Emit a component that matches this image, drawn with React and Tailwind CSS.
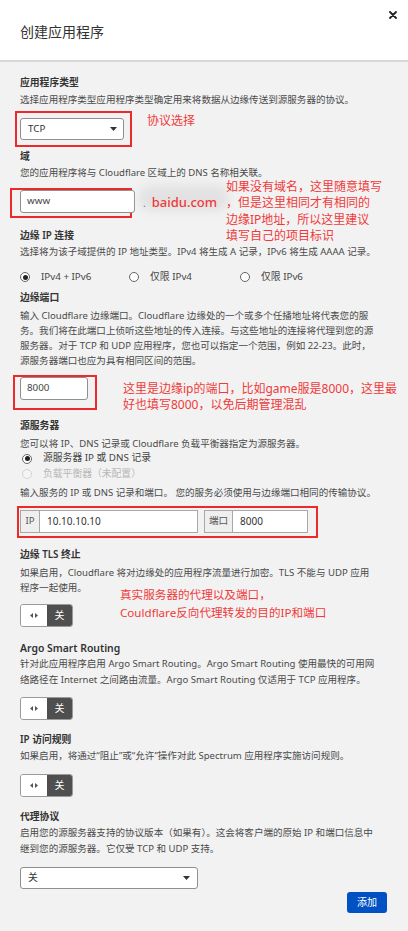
import React from "react";

const FONT = { fontFamily: '"Noto Sans", "Noto Sans CJK SC", sans-serif' };

function Label({ children, className = "" }) {
  return (
    <div className={`text-[9.8px] leading-[16px] font-semibold text-[#333333] whitespace-nowrap ${className}`}>
      {children}
    </div>
  );
}

function Desc({ children, className = "" }) {
  return (
    <div className={`text-[9.55px] text-[#4a4a4a] whitespace-nowrap ${className}`}>{children}</div>
  );
}

function Caret() {
  return (
    <svg width="7" height="4" viewBox="0 0 7 4" className="shrink-0">
      <polygon points="0,0 7,0 3.5,4" fill="#333" />
    </svg>
  );
}

function Radio({ checked, disabled, label, className = "" }) {
  return (
    <div className={`flex items-center ${className}`}>
      <span
        className={`w-[10px] h-[10px] rounded-full border flex items-center justify-center ${
          disabled ? "border-[#d4d4d4] bg-[#f4f4f4]" : "border-[#666666] bg-white"
        }`}
      >
        {checked && <span className="w-[5px] h-[5px] rounded-full bg-[#222222]" />}
      </span>
      <span className={`ml-[11px] text-[9.8px] ${disabled ? "text-[#b8b8b8]" : "text-[#444444]"}`}>{label}</span>
    </div>
  );
}

function Toggle({ className = "" }) {
  return (
    <div className={`flex w-[53px] h-[23px] rounded-[3px] border border-[#9a9a9a] overflow-hidden ${className}`}>
      <div className="w-[26px] bg-white flex items-center justify-center">
        <svg width="8" height="5" viewBox="0 0 8 5">
          <polygon points="0,2.5 3,0 3,5" fill="#555" />
          <polygon points="8,2.5 5,0 5,5" fill="#555" />
        </svg>
      </div>
      <div className="flex-1 bg-[#4f4f4f] text-white flex items-center justify-center text-[10px]">关</div>
    </div>
  );
}

function AddonInput({ addon, value, width, addonWidth }) {
  return (
    <div className={`flex h-[23px] ${width}`}>
      <div
        className={`${addonWidth} bg-[#efefef] border border-[#a8a8a8] flex items-center justify-center text-[9.6px] text-[#555555]`}
      >
        {addon}
      </div>
      <div className="flex-1 bg-white border border-l-0 border-[#a8a8a8] flex items-center pl-[7px] text-[10px] text-[#333333]">
        {value}
      </div>
    </div>
  );
}

export default function App() {
  return (
    <div style={FONT} className="w-[408px] min-h-[931px] bg-[#f2f2f2]">
      {/* Header */}
      <div className="h-[62px] bg-white border-b-2 border-[#d9d9d9] relative">
        <div className="pl-[20px] pt-[22px] text-[14px] leading-[20px] text-[#333333]">创建应用程序</div>
        <svg width="8" height="8" viewBox="0 0 8 8" className="absolute left-[389px] top-[11px]">
          <path d="M1 1 L7 7 M7 1 L1 7" stroke="#222" strokeWidth="1.8" strokeLinecap="round" />
        </svg>
      </div>

      {/* Body */}
      <div className="pl-[20px] pr-[21px] pt-[13px] pb-[20px] flex flex-col">
        {/* 应用程序类型 */}
        <Label>应用程序类型</Label>
        <Desc className="mt-[1px] leading-[16px]">选择应用程序类型应用程序类型确定用来将数据从边缘传送到源服务器的协议。</Desc>
        <div className="mt-[3px] flex items-start">
          <div className="-ml-[5px] w-[117px] h-[36px] border-2 border-[#ec2a2a] pt-[5px] pl-[3px]">
            <div className="w-[104px] h-[22px] bg-white border border-[#8f8f8f] rounded-[3px] flex items-center justify-between pl-[7px] pr-[6px]">
              <span className="text-[9.8px] text-[#333333]">TCP</span>
              <Caret />
            </div>
          </div>
          <div className="ml-[15px] mt-[2px] leading-[16px] text-[12px] text-[#f03a3a]">协议选择</div>
        </div>

        {/* 域 */}
        <Label className="mt-[2px]">域</Label>
        <Desc className="leading-[16px]">您的应用程序将与 Cloudflare 区域上的 DNS 名称相关联。</Desc>
        <div className="mt-[7px] flex items-center relative">
          <div className="-ml-[10px] w-[122px] h-[30px] border-2 border-[#ec2a2a] shrink-0">
            <div className="ml-[8px] w-[115px] h-[23px] bg-white border border-[#8f8f8f] rounded-[3px] flex items-center pl-[6px] text-[9.8px] text-[#444444]">
              www
            </div>
          </div>
          <div className="relative ml-[11px] flex items-center">
            <div className="absolute left-[-4px] top-[-8px] w-[90px] h-[26px] rounded-full bg-[#e2e2e2] blur-[5px]" />
            <span className="relative text-[10px] text-[#777777]">.</span>
            <span className="relative ml-[6px] text-[13px] font-medium text-[#f03a3a]">baidu.com</span>
          </div>
          <div className="absolute left-[206px] top-[-9px] text-[12px] leading-[16.4px] text-[#f03a3a] whitespace-nowrap">
            如果没有域名，这里随意填写
            <br />
            ，但是这里相同才有相同的
            <br />
            边缘IP地址，所以这里建议
            <br />
            填写自己的项目标识
          </div>
        </div>

        {/* 边缘 IP 连接 */}
        <Label className="mt-[10px]">边缘 IP 连接</Label>
        <Desc className="leading-[16px]">选择将为该子域提供的 IP 地址类型。IPv4 将生成 A 记录，IPv6 将生成 AAAA 记录。</Desc>
        <div className="mt-[9px] flex items-center h-[16px]">
          <Radio checked label="IPv4 + IPv6" className="w-[109px]" />
          <Radio label="仅限 IPv4" className="w-[111px]" />
          <Radio label="仅限 IPv6" />
        </div>

        {/* 边缘端口 */}
        <Label className="mt-[5px]">边缘端口</Label>
        <Desc className="mt-[1.5px] leading-[15px]">
          输入 Cloudflare 边缘端口。Cloudflare 边缘处的一个或多个任播地址将代表您的服
          <br />
          务。我们将在此端口上侦听这些地址的传入连接。与这些地址的连接将代理到您的源
          <br />
          服务器。对于 TCP 和 UDP 应用程序，您也可以指定一个范围，例如 22-23。此时，
          <br />
          源服务器端口也应为具有相同区间的范围。
        </Desc>
        <div className="mt-[7.5px] flex items-start">
          <div className="-ml-[7px] w-[84px] h-[35px] border-2 border-[#ec2a2a] shrink-0">
            <div className="ml-[5px] w-[68px] h-[23px] bg-white border border-[#8f8f8f] rounded-[3px] flex items-center pl-[6px] text-[9.8px] text-[#444444]">
              8000
            </div>
          </div>
          <div className="ml-[26px] mt-[6px] text-[12px] leading-[16px] text-[#f03a3a] whitespace-nowrap">
            这里是边缘ip的端口，比如game服是8000，这里最
            <br />
            好也填写8000，以免后期管理混乱
          </div>
        </div>

        {/* 源服务器 */}
        <Label className="mt-[5px]">源服务器</Label>
        <Desc className="mt-[3px] leading-[14px]">您可以将 IP、DNS 记录或 Cloudflare 负载平衡器指定为源服务器。</Desc>
        <div className="h-[15px] flex items-center pl-[2px]">
          <Radio checked label="源服务器 IP 或 DNS 记录" />
        </div>
        <div className="h-[16px] flex items-center pl-[2px]">
          <Radio disabled label="负载平衡器（未配置）" />
        </div>
        <Desc className="mt-[3px] leading-[16px]">输入服务的 IP 或 DNS 记录和端口。 您的服务必须使用与边缘端口相同的传输协议。</Desc>
        <div className="mt-[5px] -ml-[3px] w-[301px] h-[32px] border-2 border-[#ec2a2a] pt-[2px] pl-[1px] flex items-start gap-[6px]">
          <AddonInput addon="IP" value="10.10.10.10" width="w-[178px]" addonWidth="w-[20px]" />
          <AddonInput addon="端口" value="8000" width="w-[104px]" addonWidth="w-[29px]" />
        </div>

        {/* 边缘 TLS 终止 */}
        <Label className="mt-[9px]">边缘 TLS 终止</Label>
        <Desc className="mt-[1.5px] leading-[15px]">
          如果启用，Cloudflare 将对边缘处的应用程序流量进行加密。TLS 不能与 UDP 应用
          <br />
          程序一起使用。
        </Desc>
        <div className="mt-[9.5px] relative">
          <Toggle />
          <div className="absolute left-[100px] top-[-18px] text-[11.6px] leading-[18px] text-[#f03a3a] whitespace-nowrap">
            真实服务器的代理以及端口，
            <br />
            Couldflare反向代理转发的目的IP和端口
          </div>
        </div>

        {/* Argo */}
        <Label className="mt-[13px] text-[10.4px]">Argo Smart Routing</Label>
        <Desc className="leading-[16px]">
          针对此应用程序启用 Argo Smart Routing。Argo Smart Routing 使用最快的可用网
          <br />
          络路径在 Internet 之间路由流量。Argo Smart Routing 仅适用于 TCP 应用程序。
        </Desc>
        <Toggle className="mt-[9px]" />

        {/* IP 访问规则 */}
        <Label className="mt-[12px]">IP 访问规则</Label>
        <Desc className="leading-[16px]">如果启用，将通过“阻止”或“允许”操作对此 Spectrum 应用程序实施访问规则。</Desc>
        <Toggle className="mt-[10px]" />

        {/* 代理协议 */}
        <Label className="mt-[12px]">代理协议</Label>
        <Desc className="leading-[16px]">
          启用您的源服务器支持的协议版本（如果有）。这会将客户端的原始 IP 和端口信息中
          <br />
          继到您的源服务器。它仅受 TCP 和 UDP 支持。
        </Desc>
        <div className="mt-[10px] w-[178px] h-[22px] bg-white border border-[#8f8f8f] rounded-[3px] flex items-center justify-between pl-[7px] pr-[7px]">
          <span className="text-[9.8px] text-[#333333]">关</span>
          <Caret />
        </div>
        <div className="mt-[3px] flex justify-end">
          <button className="w-[40px] h-[21px] rounded-[3px] bg-[#0051c3] text-white text-[10px] flex items-center justify-center">
            添加
          </button>
        </div>
      </div>
    </div>
  );
}
